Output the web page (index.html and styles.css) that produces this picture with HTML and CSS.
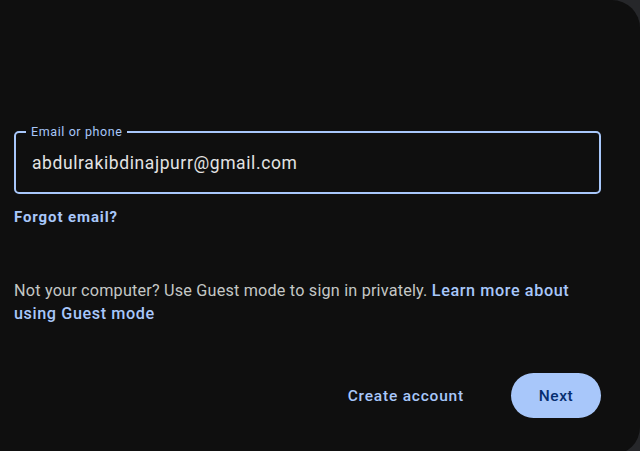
FILE: index.html
```html
<!DOCTYPE html>
<html>
<head>
<meta charset="utf-8">
<link rel="stylesheet" href="styles.css">
</head>
<body>
<div class="card">
  <div class="field">
    <span class="label">Email or phone</span>
    <div class="value">abdulrakibdinajpurr@gmail.com</div>
  </div>
  <a class="forgot">Forgot email?</a>
  <p class="note">Not your computer? Use Guest mode to sign in privately. <a class="link">Learn more about using Guest mode</a></p>
  <div class="actions">
    <a class="create">Create account</a>
    <button class="next">Next</button>
  </div>
</div>
</body>
</html>
```

FILE: styles.css
```css
html, body {
  margin: 0;
  padding: 0;
  background: #26272a;
  overflow: hidden;
}
body {
  font-family: Roboto, "Liberation Sans", sans-serif;
}
.card {
  box-sizing: border-box;
  width: 640px;
  height: 455px;
  background: #0f0f0f;
  border-top-right-radius: 28px;
  border-bottom-right-radius: 28px;
  padding: 131px 39px 0 14px;
  display: flex;
  flex-direction: column;
}
.field {
  position: relative;
  box-sizing: border-box;
  height: 63px;
  border: 2px solid #a8c7fa;
  border-radius: 5px;
  padding: 0 16px;
  display: flex;
  align-items: center;
}
.label {
  position: absolute;
  top: -9px;
  left: 10px;
  padding: 0 5px;
  background: #0f0f0f;
  color: #a8c7fa;
  font-size: 12.5px;
  line-height: 16px;
  letter-spacing: 0.6px;
}
.value {
  color: #e3e3e3;
  font-size: 17.5px;
  letter-spacing: 0.6px;
}
.forgot {
  margin-top: 14px;
  color: #a8c7fa;
  font-weight: 700;
  font-size: 15px;
  letter-spacing: 0.9px;
}
.note {
  margin: 53px 0 0;
  max-width: 578px;
  color: #c4c7c5;
  font-size: 16.2px;
  line-height: 23px;
  letter-spacing: 0.2px;
}
.link {
  color: #a8c7fa;
  font-weight: 500;
  letter-spacing: 0.6px;
}
.actions {
  margin-top: 48px;
  display: flex;
  justify-content: flex-end;
  align-items: center;
  gap: 47px;
}
.create {
  color: #a8c7fa;
  font-weight: 500;
  font-size: 15.5px;
  letter-spacing: 0.8px;
}
.next {
  width: 90px;
  height: 45px;
  border: none;
  border-radius: 23px;
  background: #a8c7fa;
  color: #062e6f;
  font-family: inherit;
  font-weight: 500;
  font-size: 15.5px;
  letter-spacing: 0.6px;
}
```
